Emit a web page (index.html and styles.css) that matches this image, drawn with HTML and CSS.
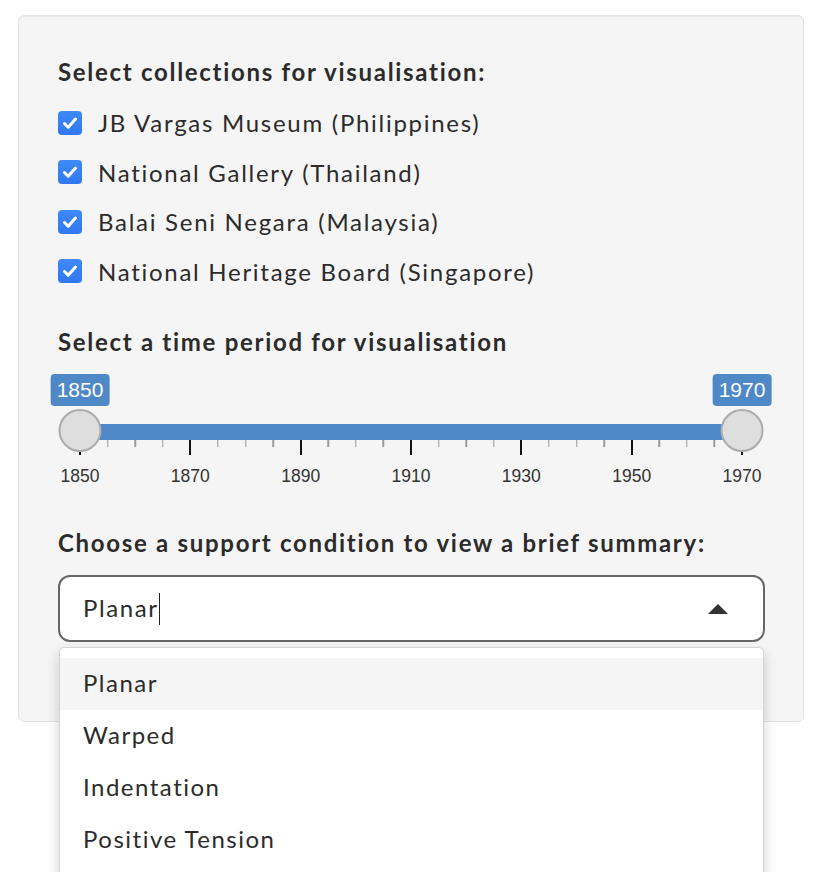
FILE: index.html
```html
<!DOCTYPE html>
<html lang="en">
<head>
<meta charset="utf-8">
<title>Sidebar</title>
<link rel="stylesheet" href="styles.css">
</head>
<body>
<div class="panel">
  <div class="group">
    <div class="heading">Select collections for visualisation:</div>
    <div class="checks">
      <label class="check"><span class="box"><svg viewBox="0 0 24 24" width="24" height="24"><path d="M6.5 12.5 L10.2 16.2 L17.5 8" fill="none" stroke="#fff" stroke-width="3" stroke-linecap="round" stroke-linejoin="round"/></svg></span><span class="check-text">JB Vargas Museum (Philippines)</span></label>
      <label class="check"><span class="box"><svg viewBox="0 0 24 24" width="24" height="24"><path d="M6.5 12.5 L10.2 16.2 L17.5 8" fill="none" stroke="#fff" stroke-width="3" stroke-linecap="round" stroke-linejoin="round"/></svg></span><span class="check-text">National Gallery (Thailand)</span></label>
      <label class="check"><span class="box"><svg viewBox="0 0 24 24" width="24" height="24"><path d="M6.5 12.5 L10.2 16.2 L17.5 8" fill="none" stroke="#fff" stroke-width="3" stroke-linecap="round" stroke-linejoin="round"/></svg></span><span class="check-text">Balai Seni Negara (Malaysia)</span></label>
      <label class="check"><span class="box"><svg viewBox="0 0 24 24" width="24" height="24"><path d="M6.5 12.5 L10.2 16.2 L17.5 8" fill="none" stroke="#fff" stroke-width="3" stroke-linecap="round" stroke-linejoin="round"/></svg></span><span class="check-text">National Heritage Board (Singapore)</span></label>
    </div>
  </div>

  <div class="group">
    <div class="heading heading-2">Select a time period for visualisation</div>
    <div class="slider">
      <div class="scale">
        <div class="line"></div>
        <span class="badge" style="left:0%">1850</span>
        <span class="badge" style="left:100%">1970</span>
        <span class="handle" style="left:0%"></span>
        <span class="handle" style="left:100%"></span>
        <span class="tick major" style="left:0%"></span>
        <span class="tick" style="left:4.1667%"></span>
        <span class="tick" style="left:8.3333%"></span>
        <span class="tick" style="left:12.5%"></span>
        <span class="tick major" style="left:16.6667%"></span>
        <span class="tick" style="left:20.8333%"></span>
        <span class="tick" style="left:25%"></span>
        <span class="tick" style="left:29.1667%"></span>
        <span class="tick major" style="left:33.3333%"></span>
        <span class="tick" style="left:37.5%"></span>
        <span class="tick" style="left:41.6667%"></span>
        <span class="tick" style="left:45.8333%"></span>
        <span class="tick major" style="left:50%"></span>
        <span class="tick" style="left:54.1667%"></span>
        <span class="tick" style="left:58.3333%"></span>
        <span class="tick" style="left:62.5%"></span>
        <span class="tick major" style="left:66.6667%"></span>
        <span class="tick" style="left:70.8333%"></span>
        <span class="tick" style="left:75%"></span>
        <span class="tick" style="left:79.1667%"></span>
        <span class="tick major" style="left:83.3333%"></span>
        <span class="tick" style="left:87.5%"></span>
        <span class="tick" style="left:91.6667%"></span>
        <span class="tick" style="left:95.8333%"></span>
        <span class="tick major" style="left:100%"></span>
        <span class="tick-label" style="left:0%">1850</span>
        <span class="tick-label" style="left:16.6667%">1870</span>
        <span class="tick-label" style="left:33.3333%">1890</span>
        <span class="tick-label" style="left:50%">1910</span>
        <span class="tick-label" style="left:66.6667%">1930</span>
        <span class="tick-label" style="left:83.3333%">1950</span>
        <span class="tick-label" style="left:100%">1970</span>
      </div>
    </div>
  </div>

  <div class="group">
    <div class="heading heading-3">Choose a support condition to view a brief summary:</div>
    <div class="select">
      <div class="select-input"><span class="select-value">Planar</span><span class="caret"></span><span class="arrow"></span></div>
      <div class="menu">
        <div class="option active">Planar</div>
        <div class="option">Warped</div>
        <div class="option">Indentation</div>
        <div class="option">Positive Tension</div>
      </div>
    </div>
  </div>
</div>
</body>
</html>
```

FILE: styles.css
```css
html, body {
  margin: 0;
  padding: 0;
  background: #ffffff;
  overflow: hidden;
}

body {
  font-family: Lato, "Open Sans", sans-serif;
  color: #333333;
  height: 872px;
}

.panel {
  margin: 15px 0 0 18px;
  width: 786px;
  height: 707px;
  box-sizing: border-box;
  padding: 39px 39px 0 39px;
  background: #f5f5f5;
  border: 1px solid #e3e3e3;
  border-radius: 6px;
  box-shadow: inset 0 1px 1px rgba(0, 0, 0, 0.05);
}

.heading {
  font-size: 24px;
  line-height: 34px;
  font-weight: 700;
  letter-spacing: 1.7px;
  color: #2b2b2b;
}

.checks {
  margin-top: 9px;
  display: flex;
  flex-direction: column;
}

.check {
  display: flex;
  align-items: center;
  height: 49.5px;
  gap: 16px;
  font-size: 24px;
  letter-spacing: 1.72px;
}

.box {
  width: 24px;
  height: 24px;
  border-radius: 4px;
  background: linear-gradient(#4089f8, #2f78f1);
  display: flex;
  flex: none;
}

.check-text {
  color: #2b2b2b;
}

.heading-2 {
  margin-top: 29px;
}

.slider {
  margin-top: 16px;
  height: 116px;
  padding: 0 22px;
}

.scale {
  position: relative;
  height: 100%;
}

.line {
  position: absolute;
  left: 0;
  right: 0;
  top: 49px;
  height: 16px;
  background: #4f88c7;
}

.badge {
  position: absolute;
  top: -1px;
  transform: translateX(-50%);
  background: #4f88c7;
  color: #ffffff;
  font-family: "Liberation Sans", Arial, sans-serif;
  font-size: 21px;
  line-height: 32px;
  height: 32px;
  padding: 0 6px;
  border-radius: 4px;
}

.handle {
  position: absolute;
  top: 34px;
  width: 43px;
  height: 43px;
  box-sizing: border-box;
  transform: translateX(-50%);
  border-radius: 50%;
  background: #dedede;
  border: 2px solid #ababab;
  z-index: 2;
}

.tick {
  position: absolute;
  top: 65px;
  width: 1.5px;
  height: 7px;
  background: #9a9a9a;
  transform: translateX(-50%);
}

.tick.major {
  height: 15px;
  width: 2px;
  background: #111111;
}

.tick-label {
  position: absolute;
  top: 91px;
  transform: translateX(-50%);
  font-family: "Liberation Sans", Arial, sans-serif;
  font-size: 17.5px;
  line-height: 20px;
  color: #333333;
}

.heading-3 {
  margin-top: 35px;
}

.select {
  position: relative;
  margin-top: 15px;
}

.select-input {
  box-sizing: border-box;
  width: 707px;
  height: 67px;
  border: 2px solid #666666;
  border-radius: 12px;
  background: #ffffff;
  display: flex;
  align-items: center;
  padding: 0 23px;
  font-size: 24px;
  letter-spacing: 1.6px;
  color: #2b2b2b;
}

.select-value {
  margin-top: -3px;
}

.caret {
  width: 1.5px;
  height: 32px;
  background: #222222;
  margin-left: 0;
}

.arrow {
  margin-left: auto;
  margin-right: 12px;
  width: 0;
  height: 0;
  border-left: 10px solid transparent;
  border-right: 10px solid transparent;
  border-bottom: 10px solid #333333;
}

.menu {
  position: absolute;
  top: 72px;
  left: 1px;
  width: 705px;
  box-sizing: border-box;
  background: #ffffff;
  border: 1px solid #d4d4d4;
  border-radius: 5px 5px 0 0;
  padding: 10px 0 40px;
  box-shadow: 0 6px 14px rgba(0, 0, 0, 0.18);
  z-index: 5;
}

.option {
  height: 52px;
  line-height: 50px;
  padding: 0 23px;
  font-size: 24px;
  letter-spacing: 1.5px;
  color: #2b2b2b;
}

.option.active {
  background: #f5f5f5;
}
```
